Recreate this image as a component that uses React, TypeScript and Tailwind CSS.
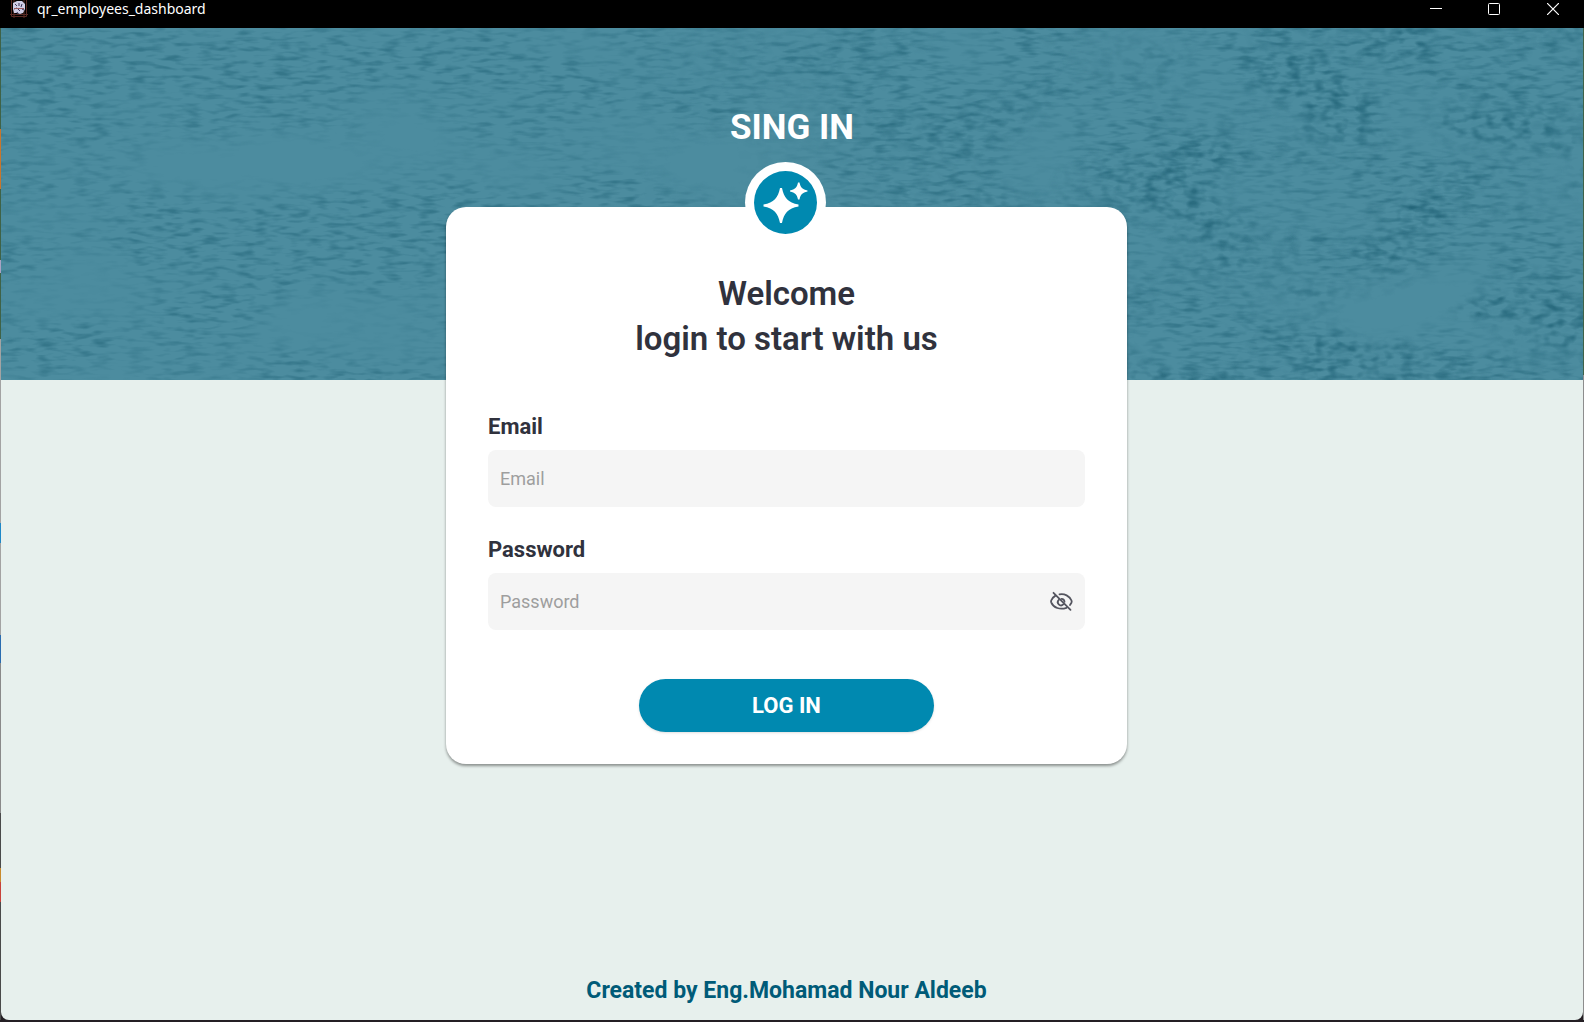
import { useState } from 'react';

function AppMark() {
  return (
    <svg width="18" height="18" viewBox="0 0 18 18" aria-hidden="true">
      <path d="M1.500 0v16.500h15V0M4 0v18M14 0v18M0 14.500h18" fill="none" stroke="#5a2a25" strokeWidth="1" />
      <path d="M3 3l4-2 5 0 3 3v5l-2 4-3 1-3-1-3 0-1-4z" fill="#cfcde6" />
      <path d="M5 4l2 2M9 3v3M12 4l-1 3M4 9l3-1M8 9l2 2M12 9l2 1M7 12l1 2" stroke="#3a3357" strokeWidth="1" />
      <path d="M4 8.500h10" stroke="#9a5a60" strokeWidth="1" />
    </svg>
  );
}

function TitleBar() {
  return (
    <header className="flex h-7 items-start justify-between bg-black text-white">
      <div className="flex items-start pl-[10px]">
        <AppMark />
        <span className="pl-[9px] font-['Noto_Sans',sans-serif] text-sm leading-[18px]">qr_employees_dashboard</span>
      </div>
      <div className="flex pr-px">
        <button type="button" aria-label="Minimize" className="flex h-[18px] w-[58px] items-center justify-center">
          <svg width="12" height="12" viewBox="0 0 12 12" stroke="#fff" fill="none"><path d="M0 5.5h12" /></svg>
        </button>
        <button type="button" aria-label="Maximize" className="flex h-[18px] w-[58px] items-center justify-center">
          <svg width="12" height="12" viewBox="0 0 12 12" stroke="#fff" fill="none"><rect x=".5" y=".5" width="11" height="11" rx="1" /></svg>
        </button>
        <button type="button" aria-label="Close" className="flex h-[18px] w-[60px] items-center justify-center">
          <svg width="12" height="12" viewBox="0 0 12 12" stroke="#fff" strokeWidth="1.2" fill="none"><path d="M0 0l12 12M12 0L0 12" /></svg>
        </button>
      </div>
    </header>
  );
}

function WaterTexture() {
  return (
    <svg className="absolute inset-0 h-full w-full" aria-hidden="true">
      <defs>
        <filter id="ripples" x="0" y="0" width="100%" height="100%" colorInterpolationFilters="sRGB">
          <feTurbulence type="fractalNoise" baseFrequency="0.055 0.21" numOctaves="2" seed="8" />
          <feColorMatrix values="0 0 0 0 0.12  0 0 0 0 0.38  0 0 0 0 0.46  3 0 0 0 -1.4" result="waves" />
          <feTurbulence type="fractalNoise" baseFrequency="0.006 0.012" numOctaves="2" seed="5" />
          <feColorMatrix values="0 0 0 0 0  0 0 0 0 0  0 0 0 0 0  3 0 0 0 -0.8" result="swell" />
          <feComposite in="waves" in2="swell" operator="in" />
        </filter>
        <filter id="patches" x="0" y="0" width="100%" height="100%" colorInterpolationFilters="sRGB">
          <feTurbulence type="fractalNoise" baseFrequency="0.07 0.13" numOctaves="2" seed="3" result="grain" />
          <feColorMatrix in="grain" values="0 0 0 0 0.08  0 0 0 0 0.34  0 0 0 0 0.42  3 0 0 0 -1.35" result="spots" />
          <feTurbulence type="fractalNoise" baseFrequency="0.008 0.016" numOctaves="2" seed="12" />
          <feColorMatrix values="0 0 0 0 0  0 0 0 0 0  0 0 0 0 0  4 0 0 0 -1.7" result="clouds" />
          <feComposite in="spots" in2="clouds" operator="in" />
        </filter>
        <linearGradient id="fade">
          <stop offset="0.4" stopColor="#000" />
          <stop offset="0.75" stopColor="#fff" />
        </linearGradient>
        <mask id="rightSide"><rect width="100%" height="100%" fill="url(#fade)" /></mask>
      </defs>
      <rect width="100%" height="100%" filter="url(#ripples)" opacity="0.5" />
      <g mask="url(#rightSide)">
        <rect width="100%" height="100%" filter="url(#patches)" opacity="0.55" />
      </g>
    </svg>
  );
}

function Sparkles() {
  return (
    <svg width="63" height="63" viewBox="0 0 63 63" aria-hidden="true">
      <circle cx="31.5" cy="31.5" r="31.5" fill="#0089b0" />
      <path
        d="M26 17H28C30 27 34 31.500 44.500 33.500V35.500C34 37.500 30 42 28 52H26C24 42 20 37.500 9.500 35.500V33.500C20 31.500 24 27 26 17Z"
        fill="#fff"
      />
      <path d="M44 11.500H45.500C46.500 16.500 48.500 18.500 53.500 19.500V20.500C48.500 21.500 46.500 23.500 45.500 28.500H44C43 23.500 41 21.500 36 20.500V19.500C41 18.500 43 16.500 44 11.500Z" fill="#fff" />
    </svg>
  );
}

function EyeOff() {
  return (
    <svg width="24" height="24" viewBox="0 0 24 24" fill="none" stroke="#54555f" strokeWidth="1.8" strokeLinecap="round" aria-hidden="true">
      <path d="M10.500 4.300C15.500 3.300 20.500 6 22.500 10.500c.3.800.3 1.600-.1 2.300L21 15" />
      <path d="M6.500 5.600C4.500 6.700 2.900 8.600 2.200 10.500c-.2.600-.2 1.200 0 1.800C4.500 18 11 20 17.500 17.800" />
      <path d="M9.800 9.800a3.200 3.200 0 0 0 4.500 4.600" />
      <path d="M12.500 8.800a3.200 3.200 0 0 1 3 3" />
      <path d="M4.500 2.800l17 17" />
    </svg>
  );
}

function LeftEdge() {
  return (
    <div className="flex w-px flex-col" aria-hidden="true">
      <div className="h-[101px] bg-[#3f6247]" />
      <div className="h-[60px] bg-[#c8762c]" />
      <div className="h-[71px] bg-[#3f6247]" />
      <div className="h-[13px] bg-[#a9a3c4]" />
      <div className="h-[66px] bg-[#3f6247]" />
      <div className="h-[184px] bg-[#a3a3a3]" />
      <div className="h-5 bg-[#1e88c8]" />
      <div className="h-[92px] bg-[#a3a3a3]" />
      <div className="h-7 bg-[#2a6cb0]" />
      <div className="h-[150px] bg-[#8a8a8a]" />
      <div className="h-[55px] bg-[#4a4a4a]" />
      <div className="h-[14px] bg-[#c98a2c]" />
      <div className="h-5 bg-[#c8423a]" />
      <div className="grow bg-[#4a4a4a]" />
    </div>
  );
}

const labelClass = 'text-[22px] leading-7 font-bold text-[#30323d]';
const inputClass =
  'h-[57px] w-full rounded-lg bg-[#f5f5f5] px-3 text-lg text-[#30323d] outline-none placeholder:text-[#9e9e9e]';

export default function App() {
  const [visible, setVisible] = useState(false);
  return (
    <div className="flex min-h-screen flex-col bg-[#241f24] font-[Roboto,sans-serif]">
      <TitleBar />
      <div className="mb-0.5 flex grow">
        <LeftEdge />
        <main className="relative flex grow flex-col items-center overflow-hidden rounded-b-lg bg-[#e7f0ed]">
          <div className="absolute inset-x-0 top-0 h-[352px] bg-[#4c8c9f]">
            <WaterTexture />
          </div>
          <h1 className="relative pt-20 text-[35px] leading-10 font-bold text-white">SING IN</h1>
          <div className="relative flex w-full grow flex-col items-center pt-[59px] pr-[11px]">
            <section className="relative flex w-[681px] max-w-full flex-col items-center rounded-[20px] bg-white px-[42px] pt-16 pb-8 shadow-[0_2px_3px_rgba(0,0,0,0.4)]">
              <div className="absolute inset-x-0 -top-[45px] flex justify-center pr-[3px]">
                <div className="flex size-[81px] items-center justify-center rounded-full bg-white">
                  <Sparkles />
                </div>
              </div>
              <h2 className="text-center text-[33px] leading-[45px] font-semibold text-[#30323d]">
                Welcome
                <br />
                login to start with us
              </h2>
              <form className="flex w-full flex-col pt-[52px]" onSubmit={(e) => e.preventDefault()}>
                <label htmlFor="email" className={labelClass}>Email</label>
                <input id="email" type="email" placeholder="Email" className={`${inputClass} mt-[9px]`} />
                <label htmlFor="password" className={`${labelClass} mt-[29px]`}>Password</label>
                <div className="relative mt-[9px]">
                  <input id="password" type={visible ? 'text' : 'password'} placeholder="Password" className={`${inputClass} pr-12`} />
                  <button
                    type="button"
                    aria-label="Show password"
                    onClick={() => setVisible(!visible)}
                    className="absolute inset-y-0 right-3 flex items-center"
                  >
                    <EyeOff />
                  </button>
                </div>
                <button
                  type="submit"
                  className="mt-[49px] h-[53px] w-[295px] self-center rounded-full bg-[#0089b0] text-[22px] font-bold text-white shadow-sm"
                >
                  LOG IN
                </button>
              </form>
            </section>
            <footer className="mt-auto pb-[15px] text-[23px] leading-7 font-bold text-[#005b78]">
              Created by Eng.Mohamad Nour Aldeeb
            </footer>
          </div>
        </main>
        <div className="w-px bg-linear-to-b from-[#3f6247] from-35% to-[#8d8d8d] to-35%" />
      </div>
    </div>
  );
}
